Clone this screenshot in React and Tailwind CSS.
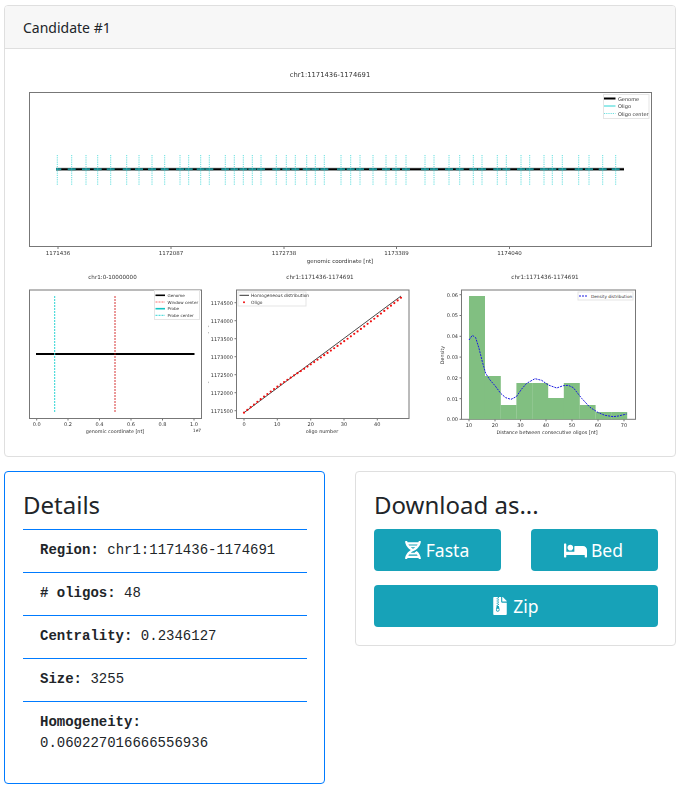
import React from 'react';
import { FaDna, FaBed, FaFileArchive } from 'react-icons/fa';

const centers = [
  57.3, 71.7, 86, 97.7, 110.7, 126.7, 139, 152, 164.7, 180, 188.7, 200.7, 209.3, 225.3, 234.3, 243.3,
  252.3, 261, 276.3, 286.3, 295.3, 306.7, 315.3, 324.3, 341, 350.7, 360, 373, 386, 396, 406, 425,
  434, 449, 459.7, 473.3, 482, 497.3, 506.3, 521, 529.7, 544, 552.3, 562.3, 578.7, 589, 602.7, 615.7,
];

const chartClass = "block shrink-0 font-['DejaVu_Sans',sans-serif] text-[5.5px] blur-[0.45px]";
const ink = '#333';
const spine = '#777';

function TopChart() {
  return (
    <svg viewBox="20 65 640 200" width="640" height="200" className={chartClass}>
      <text x="330" y="77" textAnchor="middle" fill={ink} fontSize="6.8">chr1:1171436-1174691</text>
      <rect x="29.5" y="92.5" width="622" height="154" fill="white" stroke={spine} />
      <rect x="56" y="167.5" width="568" height="3.5" fill="#9ca3a3" opacity="0.6" />
      <line x1="56" y1="169.2" x2="624" y2="169.2" stroke="black" strokeWidth="2" />
      {centers.map((c) => (
        <g key={c}>
          <line x1={Math.max(c - 4, 56)} y1="169.2" x2={c + 4} y2="169.2" stroke="#1f8f94" strokeWidth="2" />
          <line x1={c} y1="155" x2={c} y2="185" stroke="#2dd4d4" strokeDasharray="1.2 1" opacity="0.75" />
        </g>
      ))}
      {[[58, '1171436'], [171, '1172087'], [284, '1172738'], [396.5, '1173389'], [509.5, '1174040']].map(([x, t]) => (
        <g key={t}>
          <line x1={x} y1="246.5" x2={x} y2="249" stroke={spine} />
          <text x={x} y="255" textAnchor="middle" fill={ink}>{t}</text>
        </g>
      ))}
      <text x="340" y="263" textAnchor="middle" fill={ink}>genomic coordinate [nt]</text>
      <rect x="603.5" y="94.5" width="45.5" height="24" fill="white" stroke="#e5e5e5" />
      <line x1="604" y1="98.5" x2="615.5" y2="98.5" stroke="black" strokeWidth="2" />
      <line x1="604" y1="106" x2="615.5" y2="106" stroke="#2dd4d4" />
      <line x1="604" y1="113.5" x2="615.5" y2="113.5" stroke="#2dd4d4" strokeDasharray="1.2 1" opacity="0.7" />
      <text x="618" y="100.5" fill={ink} fontSize="5">Genome</text>
      <text x="618" y="108" fill={ink} fontSize="5">Oligo</text>
      <text x="618" y="115.5" fill={ink} fontSize="5">Oligo center</text>
    </svg>
  );
}

function GenomeChart() {
  return (
    <svg viewBox="20 265 185 180" width="185" height="180" className={chartClass}>
      <text x="112.5" y="278.5" textAnchor="middle" fill={ink} fontSize="5.6">chr1:0-10000000</text>
      <rect x="29.5" y="290" width="172" height="128.5" fill="white" stroke={spine} />
      <line x1="36" y1="354" x2="194.5" y2="354" stroke="black" strokeWidth="2.2" />
      <line x1="54.7" y1="296" x2="54.7" y2="413" stroke="#2dd4d4" strokeDasharray="2 1" />
      <line x1="115" y1="296" x2="115" y2="413" stroke="#c00" strokeWidth="0.8" strokeDasharray="2 1" />
      {[[36.7, '0.0'], [68, '0.2'], [99.5, '0.4'], [131, '0.6'], [162.5, '0.8'], [194, '1.0']].map(([x, t]) => (
        <g key={t}>
          <line x1={x} y1="418.5" x2={x} y2="420.5" stroke={spine} />
          <text x={x} y="426" textAnchor="middle" fill={ink} fontSize="5">{t}</text>
        </g>
      ))}
      <text x="115" y="433" textAnchor="middle" fill={ink} fontSize="4.85">genomic coordinate [nt]</text>
      <text x="197" y="432" textAnchor="middle" fill={ink} fontSize="4.4">1e7</text>
      <rect x="154.5" y="290.5" width="45" height="29" fill="white" stroke="#e5e5e5" />
      <line x1="155.5" y1="295.3" x2="165" y2="295.3" stroke="black" strokeWidth="1.6" />
      <line x1="155.5" y1="302" x2="165" y2="302" stroke="#f87171" strokeDasharray="2 1" />
      <line x1="155.5" y1="308.7" x2="165" y2="308.7" stroke="#14c4c4" strokeWidth="1.6" />
      <line x1="155.5" y1="315.3" x2="165" y2="315.3" stroke="#2dd4d4" strokeDasharray="2 1" />
      <text x="167.5" y="297" fill={ink} fontSize="4.1">Genome</text>
      <text x="167.5" y="303.6" fill={ink} fontSize="4.1">Window center</text>
      <text x="167.5" y="310.3" fill={ink} fontSize="4.1">Probe</text>
      <text x="167.5" y="317" fill={ink} fontSize="4.1">Probe center</text>
    </svg>
  );
}

const oligoDots = Array.from({ length: 48 }, (_, i) => {
  const dev = i < 17 ? -1.6 * Math.sin((Math.PI * i) / 17) : 2 * Math.sin((Math.PI * (i - 17)) / 31);
  return { x: 244 + i * 3.34, y: 412.7 - i * 2.45 + dev };
});

function OligoChart() {
  return (
    <svg viewBox="205 265 230 180" width="230" height="180" className={chartClass}>
      <text x="320" y="278.5" textAnchor="middle" fill={ink} fontSize="5.7">chr1:1171436-1174691</text>
      <rect x="236.5" y="290" width="172.5" height="128.5" fill="white" stroke={spine} />
      <line x1="244" y1="412.7" x2="401" y2="296" stroke="#333" strokeWidth="0.9" />
      {oligoDots.map((d) => (
        <circle key={d.x} cx={d.x} cy={d.y} r="1.1" fill="#f01010" />
      ))}
      {[['1174500', 302.7], ['1174000', 320.7], ['1173500', 338.7], ['1173000', 356.7], ['1172500', 374.7], ['1172000', 392.7], ['1171500', 410.7]].map(([t, y]) => (
        <g key={t}>
          <line x1="234.5" y1={y} x2="236.5" y2={y} stroke={spine} />
          <text x="233" y={y + 1.8} textAnchor="end" fill={ink} fontSize="5">{t}</text>
        </g>
      ))}
      {[[244, '0'], [277.3, '10'], [310.7, '20'], [344, '30'], [377.3, '40']].map(([x, t]) => (
        <g key={t}>
          <line x1={x} y1="418.5" x2={x} y2="420.5" stroke={spine} />
          <text x={x} y="426" textAnchor="middle" fill={ink} fontSize="5">{t}</text>
        </g>
      ))}
      <text x="322" y="433" textAnchor="middle" fill={ink} fontSize="4.9">oligo number</text>
      {[325.7, 332, 381.7].map((y) => (
        <line key={y} x1="208.3" y1={y} x2="208.3" y2={y + 1.4} stroke="#777" strokeWidth="0.6" />
      ))}
      <rect x="238" y="292" width="68" height="14" fill="white" stroke="#e5e5e5" />
      <line x1="239.5" y1="295.3" x2="249" y2="295.3" stroke="#333" />
      <circle cx="244" cy="302.3" r="1" fill="#f01010" />
      <text x="251" y="297" fill={ink} fontSize="4.4">Homogeneous distribution</text>
      <text x="251" y="304" fill={ink} fontSize="4.4">Oligo</text>
    </svg>
  );
}

const bars = [296, 376, 405, 383, 383, 398, 383, 405, 412, 412];
const kde = [
  [102, 225], [112, 211], [122, 218], [132, 250], [142, 290], [152, 325], [165, 345], [180, 362], [197, 385],
  [212, 398], [228, 403], [244, 395], [260, 372], [275, 355], [300, 341], [320, 346], [340, 360], [365, 369],
  [385, 362], [400, 361], [415, 368], [440, 400], [465, 427], [490, 443], [510, 451], [535, 455], [550, 453], [575, 447],
];

function DensityChart() {
  return (
    <svg viewBox="435 265 225 180" width="225" height="180" className={chartClass}>
      <text x="545" y="278.5" textAnchor="middle" fill={ink} fontSize="5.7">chr1:1171436-1174691</text>
      <rect x="461.5" y="290" width="174" height="129.3" fill="white" stroke={spine} />
      {bars.map((top, i) => (
        <rect key={i} x={469 + i * 15.8} y={top} width="16" height={419.3 - top} fill="#81bf81" />
      ))}
      <polyline
        points={kde.map(([x, y]) => `${x / 3 + 435},${y / 3 + 265}`).join(' ')}
        fill="none"
        stroke="#1a1ae0"
        strokeWidth="1"
        strokeDasharray="2 1"
      />
      {[['0.06', 294.7], ['0.05', 315.5], ['0.04', 336.3], ['0.03', 357.1], ['0.02', 377.9], ['0.01', 398.7], ['0.00', 419.3]].map(([t, y]) => (
        <g key={t}>
          <line x1="459.5" y1={y} x2="461.5" y2={y} stroke={spine} />
          <text x="458" y={y + 1.8} textAnchor="end" fill={ink} fontSize="5">{t}</text>
        </g>
      ))}
      {[[469, '10'], [495, '20'], [520.5, '30'], [546, '40'], [572, '50'], [598, '60'], [624, '70']].map(([x, t]) => (
        <g key={t}>
          <line x1={x} y1="419.3" x2={x} y2="421.3" stroke={spine} />
          <text x={x} y="427" textAnchor="middle" fill={ink} fontSize="5">{t}</text>
        </g>
      ))}
      <text x="547" y="433.5" textAnchor="middle" fill={ink} fontSize="4.9">Distance between consecutive oligos [nt]</text>
      <text x="444" y="355" textAnchor="middle" fill={ink} fontSize="4.8" transform="rotate(-90 444 355)">Density</text>
      <rect x="578" y="292" width="55" height="8" fill="white" stroke="#e5e5e5" />
      <line x1="579" y1="296" x2="588" y2="296" stroke="#1a1ae0" strokeDasharray="2 1" />
      <text x="591" y="298" fill={ink} fontSize="4.2">Density distribution</text>
    </svg>
  );
}

function DetailRow({ label, value, stacked }) {
  return (
    <div className="border-t border-[#007bff] pt-[10px] pb-[11px] pl-[17px] font-['Liberation_Mono',monospace] text-[14px] leading-[21px] text-[#212529]">
      <span className="font-bold">{label}:</span>
      {stacked ? <br /> : ' '}
      {value}
    </div>
  );
}

function DownloadButton({ icon, children }) {
  return (
    <button className="flex h-[42px] items-center justify-center gap-1 rounded bg-[#17a2b8] pr-[2px] text-[17.5px] text-white">
      {icon}
      <span className="pt-px">{children}</span>
    </button>
  );
}

export default function App() {
  return (
    <div className="min-h-[794px] w-[682px] bg-white px-1 pt-[5px] font-['Noto_Sans',sans-serif] text-[#212529]">
      {/* CANDIDATE CARD */}
      <div className="w-[672px] overflow-hidden rounded border border-[#dfdfdf]">
        <div className="border-b border-[#dfdfdf] bg-[#f7f7f7] px-[18px] pt-[10px] pb-2 text-[14px] leading-6">Candidate #1</div>
        <div className="h-[407px] px-[15px] pt-4">
          <TopChart />
          <div className="flex">
            <GenomeChart />
            <OligoChart />
            <DensityChart />
          </div>
        </div>
      </div>

      <div className="mt-[14px] flex items-start gap-[30px]">
        {/* DETAILS */}
        <div className="w-[321px] rounded border border-[#007bff] py-[18px] pr-[17px] pl-[18px]">
          <h4 className="mb-[10px] text-[24px] leading-[29px]">Details</h4>
          <DetailRow label="Region" value="chr1:1171436-1174691" />
          <DetailRow label="# oligos" value="48" />
          <DetailRow label="Centrality" value="0.2346127" />
          <DetailRow label="Size" value="3255" />
          <DetailRow label="Homogeneity" value="0.060227016666556936" stacked />
        </div>

        {/* DOWNLOADS */}
        <div className="w-[321px] rounded border border-[#dfdfdf] py-[18px] pr-[17px] pl-[18px]">
          <h4 className="mb-[10px] text-[24px] leading-[29px]">Download as...</h4>
          <div className="grid grid-cols-2 gap-x-[30px] gap-y-[14px]">
            <DownloadButton icon={<FaDna className="text-[18px]" />}>Fasta</DownloadButton>
            <DownloadButton icon={<FaBed className="text-[23px]" />}>Bed</DownloadButton>
            <div className="col-span-2 grid">
              <DownloadButton icon={<FaFileArchive className="text-[18px]" />}>Zip</DownloadButton>
            </div>
          </div>
        </div>
      </div>
    </div>
  );
}
